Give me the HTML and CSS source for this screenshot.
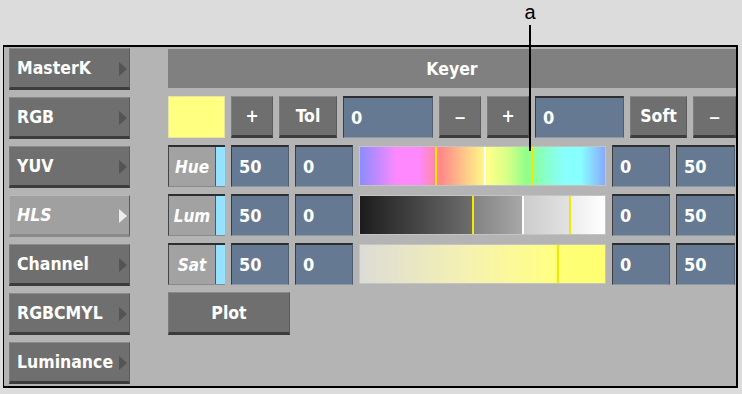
FILE: index.html
```html
<!DOCTYPE html>
<html lang="en">
<head>
    <meta charset="UTF-8">
    <title>Keyer - HLS</title>
    <link rel="stylesheet" href="styles.css">
</head>
<body>
    <div class="callout">
        <span class="callout-label">a</span>
        <div class="callout-line"></div>
    </div>

    <div class="frame">
        <div class="menu">
            <div class="menu-btn">MasterK<span class="arrow"></span></div>
            <div class="menu-btn">RGB<span class="arrow"></span></div>
            <div class="menu-btn">YUV<span class="arrow"></span></div>
            <div class="menu-btn active">HLS<span class="arrow"></span></div>
            <div class="menu-btn">Channel<span class="arrow"></span></div>
            <div class="menu-btn">RGBCMYL<span class="arrow"></span></div>
            <div class="menu-btn">Luminance<span class="arrow"></span></div>
        </div>

        <div class="keyer">
            <div class="header">Keyer</div>

            <div class="row">
                <div class="swatch"></div>
                <div class="btn w42">+</div>
                <div class="btn w58">Tol</div>
                <div class="field w90">0</div>
                <div class="btn w42 dash">&ndash;</div>
                <div class="btn w42">+</div>
                <div class="field w89">0</div>
                <div class="btn w57">Soft</div>
                <div class="btn w43 dash">&ndash;</div>
            </div>

            <div class="row">
                <div class="chan"><span>Hue</span><i class="strip"></i></div>
                <div class="field w58">50</div>
                <div class="field w58">0</div>
                <div class="bar hue">
                    <i class="mark yellow" style="left: 75px"></i>
                    <i class="mark white" style="left: 124px"></i>
                    <i class="mark yellow" style="left: 171px"></i>
                </div>
                <div class="field w58">0</div>
                <div class="field w59">50</div>
            </div>

            <div class="row">
                <div class="chan"><span>Lum</span><i class="strip"></i></div>
                <div class="field w58">50</div>
                <div class="field w58">0</div>
                <div class="bar lum">
                    <i class="mark yellow" style="left: 112px"></i>
                    <i class="mark white" style="left: 162px"></i>
                    <i class="mark yellow" style="left: 209px"></i>
                </div>
                <div class="field w58">0</div>
                <div class="field w59">50</div>
            </div>

            <div class="row">
                <div class="chan"><span>Sat</span><i class="strip"></i></div>
                <div class="field w58">50</div>
                <div class="field w58">0</div>
                <div class="bar sat">
                    <i class="mark yellow" style="left: 197px"></i>
                </div>
                <div class="field w58">0</div>
                <div class="field w59">50</div>
            </div>

            <div class="row">
                <div class="btn plot">Plot</div>
            </div>
        </div>
    </div>
</body>
</html>
```

FILE: styles.css
```css
* {
    margin: 0;
    padding: 0;
    box-sizing: border-box;
}

body {
    background: #dcdcdc;
    font-family: "DejaVu Sans Condensed", "DejaVu Sans", sans-serif;
    font-weight: bold;
    font-size: 17.5px;
    color: #fff;
    padding: 45px 0 0 3px;
    position: relative;
    height: 394px;
    overflow: hidden;
}

/* annotation over the panel */
.callout {
    position: absolute;
    left: 520px;
    top: 0;
    width: 20px;
    z-index: 5;
}

.callout-label {
    display: block;
    text-align: center;
    color: #000;
    font-family: "Liberation Sans", sans-serif;
    font-weight: normal;
    font-size: 20px;
    line-height: 22px;
    padding-top: 1px;
}

.callout-line {
    position: absolute;
    left: 9px;
    top: 25px;
    width: 2px;
    height: 126px;
    background: #000;
}

.frame {
    width: 735px;
    height: 343px;
    border: 2px solid #000;
    border-left-width: 1px;
    background: #b4b4b4;
    display: flex;
    padding: 1px 0 0 5px;
}

/* left menu */
.menu {
    width: 121px;
    display: flex;
    flex-direction: column;
    gap: 7px;
}

.menu-btn {
    height: 42px;
    display: flex;
    align-items: center;
    padding-left: 7px;
    position: relative;
    background: #6f6f6f;
    border-top: 1px solid #8a8a8a;
    border-left: 1px solid #7c7c7c;
    border-right: 1px solid #5c5c5c;
    border-bottom: 3px solid #3c3c3c;
}

.menu-btn.active {
    background: #a0a0a0;
    font-style: italic;
    border-top-color: #b8b8b8;
    border-left-color: #b0b0b0;
    border-bottom-color: #8a8a8a;
}

.arrow {
    position: absolute;
    right: 2px;
    top: 13px;
    width: 0;
    height: 0;
    border-top: 7px solid transparent;
    border-bottom: 7px solid transparent;
    border-left: 8px solid #545454;
}

.menu-btn.active .arrow {
    border-left-color: #ececec;
}

/* keyer section */
.keyer {
    margin-left: 38px;
    margin-top: 1px;
    flex: 1;
    display: flex;
    flex-direction: column;
    gap: 7px;
}

.header {
    height: 39px;
    background: #808080;
    display: flex;
    align-items: center;
    justify-content: center;
    margin-bottom: 1px;
}

.row {
    height: 42px;
    display: flex;
    gap: 6px;
}

.swatch {
    width: 57px;
    background: #ffff80;
    border: 1px solid #e4e4a0;
}

.btn {
    display: flex;
    align-items: center;
    justify-content: center;
    background: #6f6f6f;
    border-top: 1px solid #8a8a8a;
    border-left: 1px solid #7c7c7c;
    border-right: 1px solid #5c5c5c;
    border-bottom: 3px solid #3c3c3c;
}

.btn.dash {
    font-weight: normal;
    font-size: 25px;
}

.plot {
    width: 122px;
    height: 43px;
}

.field {
    display: flex;
    align-items: center;
    padding-left: 7px;
    background: #657a92;
    border-top: 2px solid #2e2e2e;
    border-left: 1px solid #3c3c3c;
    border-right: 1px solid #4e5e70;
    border-bottom: 1px solid #8c98a4;
    font-size: 18px;
}

.w42 { width: 42px; }
.w43 { width: 43px; }
.w57 { width: 57px; }
.w58 { width: 58px; }
.w59 { width: 59px; }
.w89 { width: 89px; }
.w90 { width: 90px; }

.chan {
    width: 57px;
    display: flex;
    background: #a2a2a2;
    border-top: 2px solid #2e2e2e;
    border-left: 1px solid #444;
    border-bottom: 1px solid #8a8a8a;
    font-style: italic;
    font-size: 17px;
}

.chan span {
    flex: 1;
    display: flex;
    align-items: center;
    justify-content: center;
}

.strip {
    width: 10px;
    background: #94e2ff;
    border-left: 1px solid #555;
}

.bar {
    width: 247px;
    margin-top: 1px;
    height: 40px;
    position: relative;
    border: 1px solid #c4c4c4;
}

.bar.hue {
    background: linear-gradient(to right,
        #8c8cff 0%, #ff88ff 15%, #ff88ff 24%, #ff8888 33%,
        #ffd088 44%, #ffff88 52%, #d8ff88 60%, #90ff88 68%,
        #88ffcc 76%, #88ffff 84%, #88ffff 90%, #88aaff 100%);
}

.bar.lum {
    background:
        linear-gradient(to right, #1c1c1c 0, #6e6e6e 113px, transparent 113px),
        linear-gradient(to right, transparent 113px, #828282 113px, #a8a8a8 163px, transparent 163px),
        linear-gradient(to right, transparent 163px, #cccccc 163px, #e2e2e2 210px, #ececec 210px, #ffffff 245px);
}

.bar.sat {
    background: linear-gradient(to right, #dcdcd6 0%, #f6f2b0 45%, #ffff84 78%, #ffff78 80%, #ffff70 100%);
}

.mark {
    position: absolute;
    top: 0;
    bottom: 0;
    width: 2px;
}

.mark.yellow { background: #f4e800; }
.mark.white { background: #ffffff; }
```
